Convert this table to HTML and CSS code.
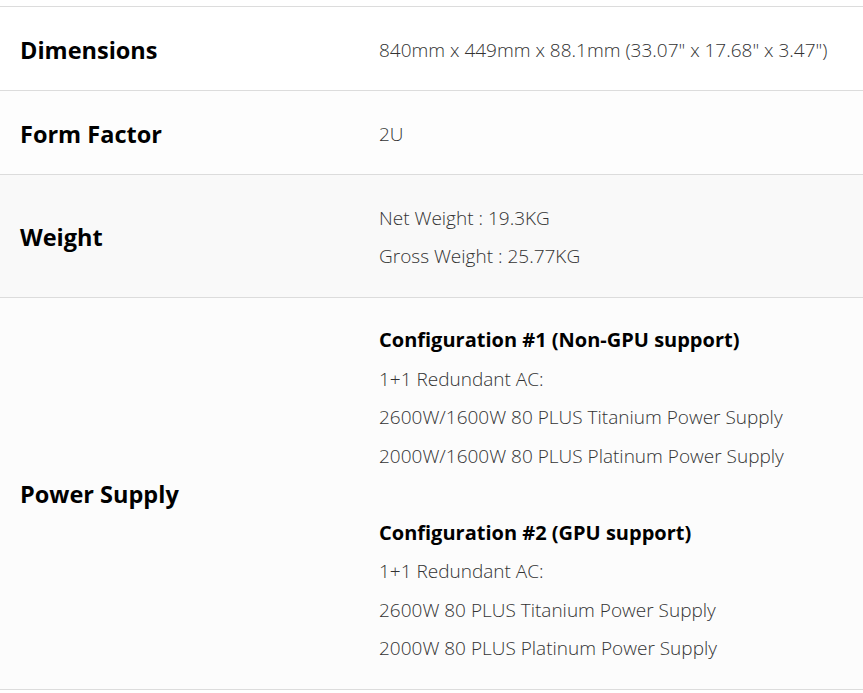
FILE: index.html
```html
<!DOCTYPE html>
<html>
<head>
    <meta name="viewport" content="width=device-width, initial-scale=1.0">
    <link rel="stylesheet" href="styles.css">
</head>
<body>
    <table class="spec-table">
        <tr class="row-1">
            <th>Dimensions</th>
            <td>840mm x 449mm x 88.1mm (33.07" x 17.68" x 3.47")</td>
        </tr>
        <tr class="row-2">
            <th>Form Factor</th>
            <td>2U</td>
        </tr>
        <tr class="row-3">
            <th>Weight</th>
            <td>
                Net Weight : 19.3KG<br>
                Gross Weight : 25.77KG
            </td>
        </tr>
        <tr class="row-4">
            <th>Power Supply</th>
            <td>
                <div class="config">
                    <b>Configuration #1 (Non-GPU support)</b><br>
                    1+1 Redundant AC:<br>
                    2600W/1600W 80 PLUS Titanium Power Supply<br>
                    2000W/1600W 80 PLUS Platinum Power Supply
                </div>
                <div class="config">
                    <b>Configuration #2 (GPU support)</b><br>
                    1+1 Redundant AC:<br>
                    2600W 80 PLUS Titanium Power Supply<br>
                    2000W 80 PLUS Platinum Power Supply
                </div>
            </td>
        </tr>
    </table>
</body>
</html>
```

FILE: styles.css
```css
body {
    margin: 0;
    padding-top: 6px;
    background: #fff;
    font-family: "Open Sans", "Noto Sans", Arial, sans-serif;
}

.spec-table {
    width: 100%;
    border-collapse: collapse;
    border-top: 1px solid #dcdcdc;
}

.spec-table tr {
    border-bottom: 1px solid #dcdcdc;
}

.spec-table th {
    width: 359px;
    padding: 23.5px 0 21px 20px;
    text-align: left;
    vertical-align: middle;
    font-size: 23.5px;
    font-weight: 700;
    color: #000;
}

.spec-table td {
    padding: 23.5px 0 21px;
    font-size: 19px;
    font-weight: 300;
    line-height: 38.5px;
    color: #333;
}

.spec-table td b {
    font-size: 20px;
    font-weight: 700;
    color: #000;
}

.config + .config {
    margin-top: 38.5px;
}

.row-1 { background: #fff; }
.row-2 { background: #fdfdfd; }
.row-3 { background: #f9f9f9; }
.row-4 { background: #fcfcfc; }
```
